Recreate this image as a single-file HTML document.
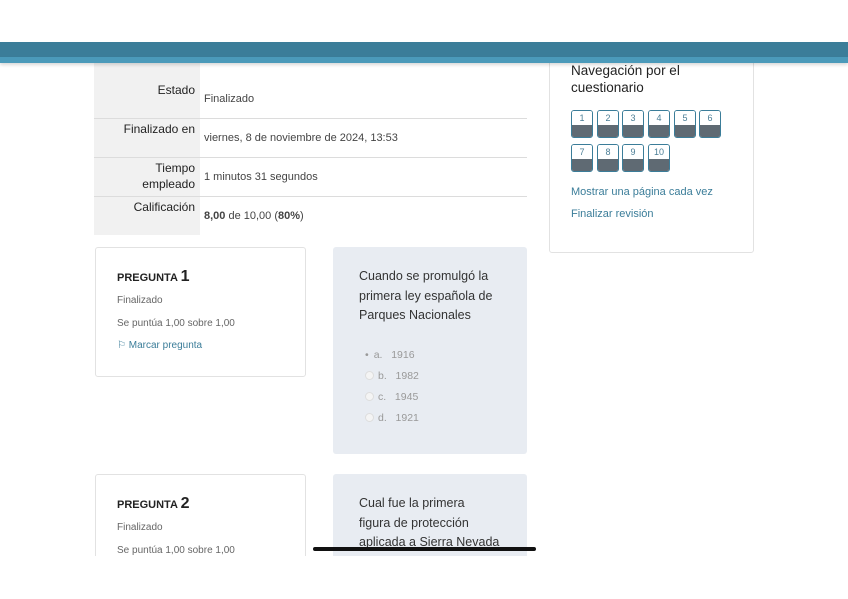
<!DOCTYPE html>
<html><head><meta charset="utf-8"><style>
*{margin:0;padding:0;box-sizing:border-box}
body{width:848px;height:599px;background:#fff;position:relative;overflow:hidden;font-family:"Liberation Sans",sans-serif;color:#333}
.a{position:absolute}
.bar1{left:0;top:42px;width:848px;height:15px;background:#3b7d99}
.bar2{left:0;top:57px;width:848px;height:6px;background:#4b9aba;box-shadow:0 2px 3px rgba(0,0,0,.15)}
.gray{left:94px;top:63px;width:106px;height:172px;background:#f1f1f1}
.line{left:94px;width:433px;height:1px;background:#dcdcdc}
.lbl{right:653px;text-align:right;font-size:12px;color:#222;line-height:16px}
.val{left:204px;font-size:11px;color:#444}
.card{border:1px solid #e2e2e2;border-radius:3px;background:#fff}
.qb{background:#e8ecf2;border-radius:3px}
.qt{font-size:12.5px;line-height:19.5px;color:#333}
.small{font-size:10px;color:#666}
.opt{font-size:10.5px;color:#999}
.rad{display:inline-block;width:9px;height:9px;border:1px solid #ddd;border-radius:50%;background:#f4f4f4;vertical-align:-1px;margin-right:4px}
.nb{width:22px;height:28px;border:1px solid #3b7d99;border-radius:3px;overflow:hidden;font-size:9px;color:#4a7d95;text-align:center}
.nb div{height:14px;line-height:14px;background:#fff}
.nb span{display:block;height:14px;background:#5f6a73}
</style></head><body>
<div class="a card" style="left:549px;top:50px;width:205px;height:203px"></div>
<div class="a bar1"></div>
<div class="a gray"></div>
<div class="a bar2"></div>
<div class="a line" style="top:118px"></div>
<div class="a line" style="top:157px"></div>
<div class="a line" style="top:196px"></div>
<div class="a lbl" style="top:82px">Estado</div>
<div class="a val" style="top:93px">Finalizado</div>
<div class="a lbl" style="top:121px">Finalizado en</div>
<div class="a val" style="top:132px">viernes, 8 de noviembre de 2024, 13:53</div>
<div class="a lbl" style="top:160px">Tiempo<br>empleado</div>
<div class="a val" style="top:171px">1 minutos 31 segundos</div>
<div class="a lbl" style="top:199px">Calificación</div>
<div class="a val" style="top:210px"><b>8,00</b> de 10,00 (<b>80%</b>)</div>

<div class="a card" style="left:95px;top:247px;width:211px;height:130px"></div>
<div class="a" style="left:117px;top:268px;font-size:11px;font-weight:bold;color:#222">PREGUNTA <span style="font-size:16px">1</span></div>
<div class="a small" style="left:117px;top:295px">Finalizado</div>
<div class="a small" style="left:117px;top:318px">Se puntúa 1,00 sobre 1,00</div>
<div class="a small" style="left:117px;top:340px;color:#3b7d99">⚐ Marcar pregunta</div>

<div class="a qb" style="left:333px;top:247px;width:194px;height:207px"></div>
<div class="a qt" style="left:359px;top:267px">Cuando se promulgó la<br>primera ley española de<br>Parques Nacionales</div>
<div class="a opt" style="left:365px;top:349px"><span style="margin-right:5px">•</span>a.&nbsp;&nbsp; 1916</div>
<div class="a opt" style="left:365px;top:370px"><span class="rad"></span>b.&nbsp;&nbsp; 1982</div>
<div class="a opt" style="left:365px;top:391px"><span class="rad"></span>c.&nbsp;&nbsp; 1945</div>
<div class="a opt" style="left:365px;top:412px"><span class="rad"></span>d.&nbsp;&nbsp; 1921</div>

<div class="a card" style="left:95px;top:474px;width:211px;height:100px"></div>
<div class="a" style="left:117px;top:495px;font-size:11px;font-weight:bold;color:#222">PREGUNTA <span style="font-size:16px">2</span></div>
<div class="a small" style="left:117px;top:522px">Finalizado</div>
<div class="a small" style="left:117px;top:545px">Se puntúa 1,00 sobre 1,00</div>
<div class="a qb" style="left:333px;top:474px;width:194px;height:100px"></div>
<div class="a qt" style="left:359px;top:494px">Cual fue la primera<br>figura de protección<br>aplicada a Sierra Nevada</div>
<div class="a" style="left:0;top:556px;width:848px;height:43px;background:#fff"></div>
<div class="a" style="left:313px;top:547px;width:223px;height:4px;background:#111;border-radius:2px"></div>

<div class="a" style="left:571px;top:62px;font-size:13.5px;line-height:17px;color:#222">Navegación por el<br>cuestionario</div>
<div class="a nb" style="left:571px;top:110px"><div>1</div><span></span></div>
<div class="a nb" style="left:597px;top:110px"><div>2</div><span></span></div>
<div class="a nb" style="left:622px;top:110px"><div>3</div><span></span></div>
<div class="a nb" style="left:648px;top:110px"><div>4</div><span></span></div>
<div class="a nb" style="left:674px;top:110px"><div>5</div><span></span></div>
<div class="a nb" style="left:699px;top:110px"><div>6</div><span></span></div>
<div class="a nb" style="left:571px;top:144px"><div>7</div><span></span></div>
<div class="a nb" style="left:597px;top:144px"><div>8</div><span></span></div>
<div class="a nb" style="left:622px;top:144px"><div>9</div><span></span></div>
<div class="a nb" style="left:648px;top:144px"><div>10</div><span></span></div>
<div class="a" style="left:571px;top:186px;font-size:11px;color:#3b7d99">Mostrar una página cada vez</div>
<div class="a" style="left:571px;top:208px;font-size:11px;color:#3b7d99">Finalizar revisión</div>
</body></html>
